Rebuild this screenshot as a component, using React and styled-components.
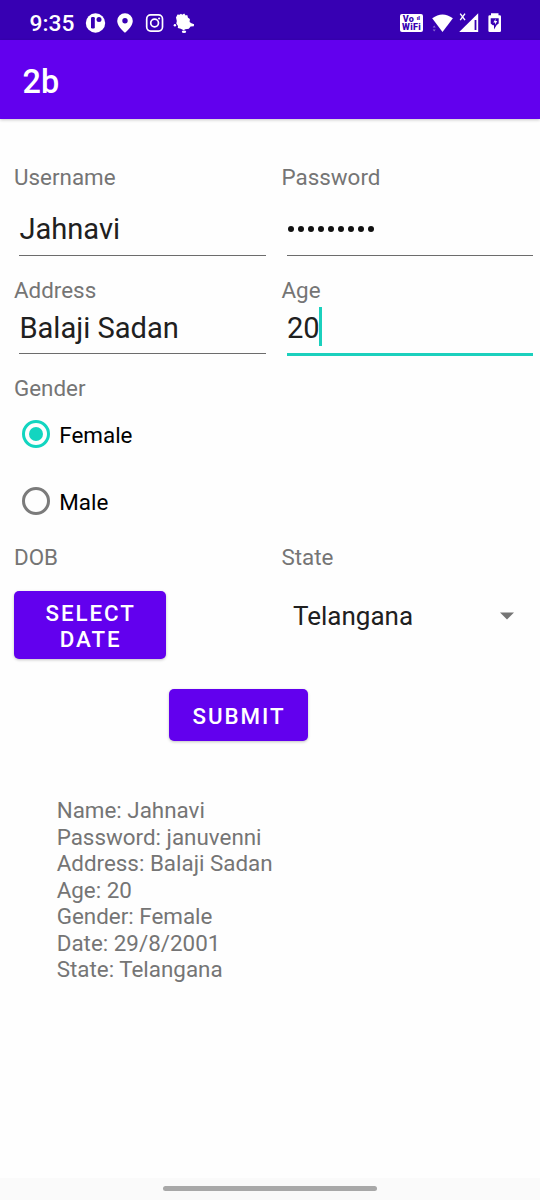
import React from 'react';
import styled, { createGlobalStyle } from 'styled-components';

const GlobalStyle = createGlobalStyle`
  * { box-sizing: border-box; }
  body { margin: 0; background: #fff; font-family: Roboto, "Liberation Sans", sans-serif; }
`;

const Screen = styled.div`
  display: flex;
  flex-direction: column;
  width: 540px;
  height: 1200px;
  background: #fefefe;
  overflow: hidden;
`;

const StatusBar = styled.header`
  flex: none;
  display: flex;
  justify-content: space-between;
  height: 40px;
  padding: 0 38px 0 30px;
  background: #3700b3;
  color: #fff;
`;

const Clock = styled.span`
  width: 55px;
  font-size: 22.8px;
  font-weight: 500;
  line-height: 47px;
  text-indent: -0.5px;
`;

const StatusGroup = styled.div`
  display: flex;
  svg { display: block; }
`;

const AppBar = styled.div`
  flex: none;
  height: 79px;
  padding-left: 22.5px;
  background: #6200ee;
  box-shadow: 0 1px 3px rgba(0, 0, 0, 0.22);
  color: #fff;
  font-size: 32.4px;
  font-weight: 500;
  line-height: 84px;
`;

const Form = styled.main`
  flex: 1;
  display: flex;
  flex-direction: column;
  padding: 45px 6px 0 14px;
`;

const Row = styled.div`
  flex: none;
  display: grid;
  grid-template-columns: 252px 252px;
  column-gap: 15.5px;
  height: ${(p) => p.$height}px;
`;

const Cell = styled.div`
  display: flex;
  flex-direction: column;
`;

const Label = styled.label`
  flex: none;
  height: 27px;
  color: #757575;
  font-size: 22.4px;
  line-height: 27px;
  white-space: nowrap;
`;

const Input = styled.div`
  flex: none;
  display: flex;
  align-items: flex-end;
  height: ${(p) => p.$height}px;
  margin: 0 0.5px 0 5.4px;
  padding-bottom: ${(p) => p.$bottom}px;
  border-bottom: ${(p) => (p.$active ? '3px solid #1bd0bd' : '1px solid #6c6c6c')};
  color: #202020;
  font-size: 29.1px;
  line-height: 34px;
  white-space: nowrap;
`;

const Caret = styled.span`
  width: 3px;
  height: 39px;
  margin: 0 0 -1px -0.8px;
  background: #1bd0bd;
`;

const Dots = styled.span`
  display: flex;
  gap: 4px;
  padding-left: 1.5px;
  i { width: 6px; height: 6px; border-radius: 50%; background: #111; }
`;

const Radio = styled.div`
  display: flex;
  align-items: center;
  gap: 9px;
  height: 67px;
  padding-left: 8.3px;
  color: #000;
  font-size: 22.4px;
  line-height: 27px;
`;

const RadioMark = styled.span`
  display: grid;
  place-items: center;
  width: 28px;
  height: 28px;
  margin-top: -3px;
  border: 3px solid ${(p) => (p.$checked ? '#12d5c0' : '#7b7b7b')};
  border-radius: 50%;
  &::after {
    content: '';
    width: 14px;
    height: 14px;
    border-radius: 50%;
    background: ${(p) => (p.$checked ? '#12d5c0' : 'transparent')};
  }
`;

const Button = styled.button`
  flex: none;
  display: grid;
  place-items: center;
  width: ${(p) => p.$width}px;
  height: ${(p) => p.$height}px;
  margin-top: ${(p) => p.$top || 0}px;
  padding: 2px 0 0 1.4px;
  border: 0;
  border-radius: 5px;
  background: #6200ee;
  box-shadow: 0 1px 3px rgba(0, 0, 0, 0.24);
  color: #fff;
  font-family: inherit;
  font-size: 22.3px;
  font-weight: 500;
  line-height: 26.5px;
  letter-spacing: 1.95px;
`;

const SubmitRow = styled.div`
  display: flex;
  padding-left: 155px;
`;

const Spinner = styled.div`
  display: flex;
  align-items: center;
  justify-content: space-between;
  height: 32px;
  margin-top: 29px;
  padding: 0 20px 0 11.5px;
  color: #202020;
  font-size: 26px;
`;

const Result = styled.p`
  margin: 56px 0 0 42.7px;
  color: #757575;
  font-size: 22.4px;
  line-height: 26.5px;
  white-space: pre-line;
`;

const NavBar = styled.footer`
  flex: none;
  display: flex;
  justify-content: center;
  height: 22px;
  padding-top: 8px;
  background: #fafafa;
`;

const Pill = styled.div`
  width: 214px;
  height: 5px;
  border-radius: 3px;
  background: #a8a8a8;
`;

const NotificationIcons = () => (
  <svg width="115" height="40" viewBox="85 0 115 40">
    <circle cx="95.5" cy="23" r="9.7" fill="#fff" />
    <rect x="91" y="17" width="3.8" height="11.5" rx="1.2" fill="#3700b3" />
    <circle cx="99" cy="19.6" r="2.5" fill="#3700b3" />
    <path d="M125 13.200a7.800 7.800 0 0 0-7.800 7.800c0 5.600 7.800 11.800 7.800 11.800s7.800-6.200 7.800-11.800a7.800 7.800 0 0 0-7.800-7.800zm0 4.900a2.700 2.700 0 1 1 0 5.400 2.700 2.700 0 0 1 0-5.400z" fill="#fff" />
    <g fill="none" stroke="#fff" strokeWidth="1.7">
      <rect x="146.700" y="14.900" width="15.800" height="16.200" rx="4" />
      <circle cx="154.600" cy="23" r="3.900" />
    </g>
    <circle cx="159.100" cy="18.500" r="1.100" fill="#fff" />
    <path d="M177.500 14.500l2 .2 1.500-1 1.200 1 2-1.200 1.500 2 1.500-.5.800 2.800 1.900 1.200-.3 3 1.800 1.200 2.700 1-.3 2-3.200.4-1.800 2.200-3.500.5-1.600 1-3-1.500-2.900-.7.200-2.200-1.700-2.300.5-2.500-.8-3.600z" fill="#fff" />
    <circle cx="174.900" cy="25.200" r="1.200" fill="#fff" />
    <ellipse cx="184" cy="31.800" rx="2.200" ry="1.200" fill="#fff" />
  </svg>
);

const VoWifi = styled.div`
  position: relative;
  flex: none;
  width: 23px;
  height: 18px;
  margin: 14px 9px 0 0;
  padding-top: 1px;
  border-radius: 2px;
  background: #fff;
  color: #3700b3;
  font-size: 9px;
  font-weight: 900;
  line-height: 8px;
  text-align: center;
  letter-spacing: 0.3px;
  sup { position: absolute; top: 0; right: 3px; font-size: 6px; line-height: 7px; letter-spacing: 0; }
  div:first-child { padding-right: 6px; }
`;

const SignalIcons = () => (
  <svg width="70" height="40" viewBox="432 0 70 40">
    <path d="M432.200 18.200Q442.500 10.600 452.900 18.200L442.500 32z" fill="#fff" />
    <path d="M434.200 25.500l-1.500 2h3zM434.200 31.500l-1.500-2h3z" fill="#8b6bd1" />
    <path d="M460.200 13.700l4.800 6.500M465 13.700l-4.800 6.500" stroke="#fff" strokeWidth="1.400" />
    <path d="M478.200 13.200V32h-19z" fill="#fff" />
    <path d="M475.500 20v10" stroke="#3700b3" strokeWidth="1.800" />
    <path d="M491 13.300h7.500v2h1.200a1.300 1.300 0 0 1 1.300 1.300v14.100a1.300 1.300 0 0 1-1.300 1.300h-10a1.300 1.300 0 0 1-1.300-1.300V16.600a1.300 1.300 0 0 1 1.300-1.300H491z" fill="#fff" />
    <path d="M490.700 18.200h8v5.200l-2 1.500-2.700 4.500v-4.200h-1.200l-2.100-1.700z" fill="#3700b3" />
    <path d="M495.700 18.800l-2.400 3.700h1.800v2.300l2.100-3.700h-1.800z" fill="#fff" />
  </svg>
);

export default function App() {
  return (
    <>
      <GlobalStyle />
      <Screen>
        <StatusBar>
          <StatusGroup>
            <Clock>9:35</Clock>
            <NotificationIcons />
          </StatusGroup>
          <StatusGroup>
            <VoWifi>
              <div>Vo<sup>ıl</sup></div>
              <div>WiFi</div>
            </VoWifi>
            <SignalIcons />
          </StatusGroup>
        </StatusBar>
        <AppBar>2b</AppBar>
        <Form>
          <Row $height={112.5}>
            <Cell>
              <Label>Username</Label>
              <Input $height={65} $bottom={9}>Jahnavi</Input>
            </Cell>
            <Cell>
              <Label>Password</Label>
              <Input $height={65} $bottom={23.5}>
                <Dots>{Array.from({ length: 9 }, (_, i) => <i key={i} />)}</Dots>
              </Input>
            </Cell>
          </Row>
          <Row $height={98.5}>
            <Cell>
              <Label>Address</Label>
              <Input $height={50.5} $bottom={8.5}>Balaji Sadan</Input>
            </Cell>
            <Cell>
              <Label>Age</Label>
              <Input $height={52.5} $bottom={8.5} $active>20<Caret /></Input>
            </Cell>
          </Row>
          <Row $height={169}>
            <Cell>
              <Label>Gender</Label>
              <Radio><RadioMark $checked />Female</Radio>
              <Radio><RadioMark />Male</Radio>
            </Cell>
          </Row>
          <Row $height={145}>
            <Cell>
              <Label>DOB</Label>
              <Button $width={152} $height={68} $top={20}>
                <span>SELECT<br />DATE</span>
              </Button>
            </Cell>
            <Cell>
              <Label>State</Label>
              <Spinner>
                Telangana
                <svg width="14" height="8" viewBox="0 0 14 8"><path d="M0 .5h14L7 7.500z" fill="#757575" /></svg>
              </Spinner>
            </Cell>
          </Row>
          <SubmitRow>
            <Button $width={138.5} $height={52}>SUBMIT</Button>
          </SubmitRow>
          <Result>
            {'Name: Jahnavi\nPassword: januvenni\nAddress: Balaji Sadan\nAge: 20\nGender: Female\nDate: 29/8/2001\nState: Telangana'}
          </Result>
        </Form>
        <NavBar><Pill /></NavBar>
      </Screen>
    </>
  );
}
